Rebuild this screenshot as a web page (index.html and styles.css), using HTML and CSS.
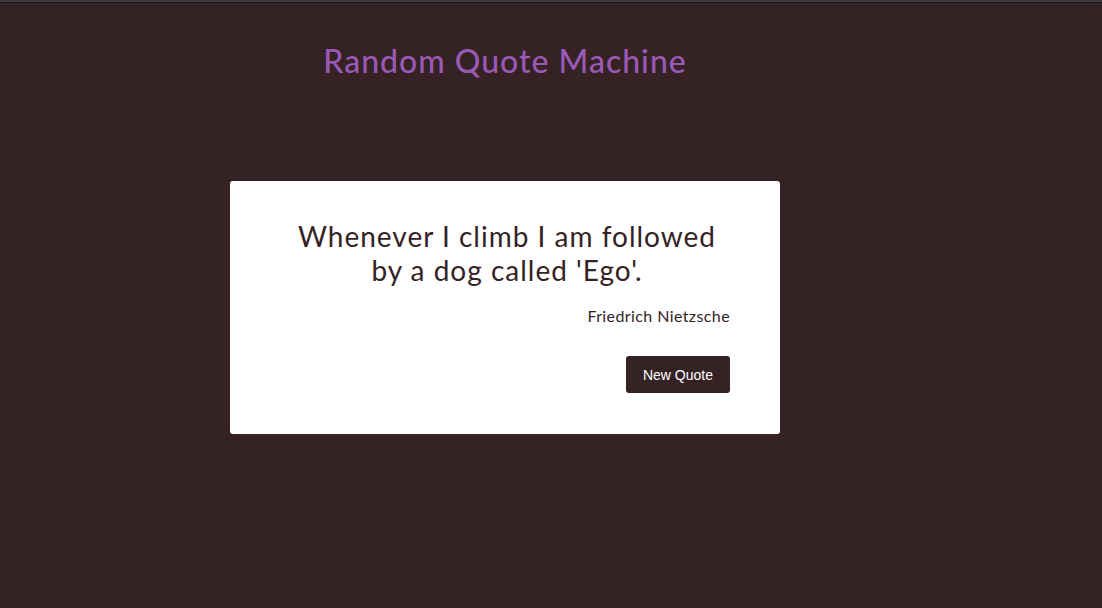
FILE: index.html
```html
<!DOCTYPE html>
<html>
<head>
<meta charset="utf-8">
<title>Random Quote Machine</title>
<link rel="stylesheet" href="styles.css">
</head>
<body>
<div class="topbar"></div>
<main class="wrapper">
  <h1 class="title">Random Quote Machine</h1>
  <section class="card">
    <p class="quote">Whenever I climb I am followed by a dog called 'Ego'.</p>
    <p class="author">Friedrich Nietzsche</p>
    <div class="actions">
      <button class="btn">New Quote</button>
    </div>
  </section>
</main>
</body>
</html>
```
FILE: styles.css
```css
html, body {
  margin: 0;
  padding: 0;
}
body {
  background: #352225;
  font-family: Lato, "Open Sans", sans-serif;
  height: 608px;
  overflow: hidden;
}
.topbar {
  height: 2px;
  background: #3c3b3c;
  border-bottom: 1px solid #1f1a1b;
}
.wrapper {
  width: 550px;
  margin-left: 230px;
}
.title {
  margin: 0;
  padding-top: 38px;
  font-size: 32px;
  line-height: 40px;
  font-weight: 500;
  letter-spacing: 1px;
  color: #9b59b6;
  text-align: center;
}
.card {
  margin-top: 100px;
  background: #fff;
  border-radius: 3px;
  padding: 38px 50px 40px 50px;
  height: 253px;
  box-sizing: border-box;
}
.quote {
  margin: 0 8px 0 12px;
  font-size: 28px;
  line-height: 34px;
  letter-spacing: 1px;
  color: #352225;
  text-align: center;
}
.author {
  margin: 18px 0 0;
  text-align: right;
  font-size: 16px;
  line-height: 22px;
  letter-spacing: 0.4px;
  color: #352225;
}
.actions {
  display: flex;
  justify-content: flex-end;
  margin-top: 29px;
}
.btn {
  font-family: "Liberation Sans", Arial, sans-serif;
  font-size: 14px;
  color: #fff;
  background: #352225;
  border: none;
  border-radius: 3px;
  width: 104px;
  height: 37px;
  padding: 0 0 0 0;
  line-height: 39px;
}
```
